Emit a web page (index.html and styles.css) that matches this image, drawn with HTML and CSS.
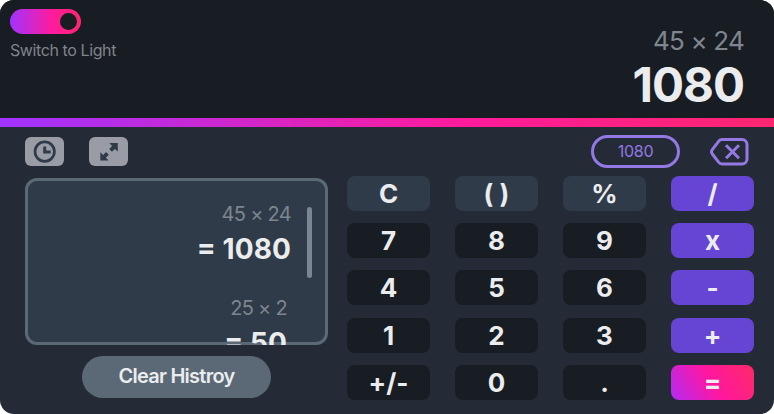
FILE: index.html
```
<!DOCTYPE html>
<html lang="en">
<head>
<meta charset="utf-8">
<title>Calculator</title>
<link rel="stylesheet" href="styles.css">
</head>
<body>
<main class="calculator">
  <header class="display">
    <div class="theme">
      <div class="toggle"><span class="knob"></span></div>
      <span class="theme-label">Switch to Light</span>
    </div>
    <div class="output">
      <span class="expression">45 × 24</span>
      <strong class="result">1080</strong>
    </div>
  </header>
  <div class="divider"></div>
  <section class="body">
    <div class="toolbar">
      <button class="tool" aria-label="History">
        <svg width="24" height="24" viewBox="0 0 24 24" fill="none" stroke="#2f3b49" stroke-width="2.7"><circle cx="11.700" cy="11.600" r="9.7"/><path d="M11.700 6.600v5.300h6" stroke-width="3"/></svg>
      </button>
      <button class="tool" aria-label="Expand">
        <svg width="24" height="24" viewBox="0 0 24 24" fill="#2f3b49"><path d="M12.3 3H20.8V11.5L17.9 8.9L14.9 11.7L12.2 9.1L15.1 6ZM3.3 12.2L6.2 14.9L9 12.1L11.8 14.8L8.9 17.7L11.7 20.5H3.3Z"/></svg>
      </button>
      <span class="memory">1080</span>
      <button class="erase" aria-label="Delete">
        <svg width="40" height="28" viewBox="0 0 40 28" fill="none" stroke="#9478e4" stroke-width="3"><path d="M12 1.5H32a5 5 0 0 1 5 5V21a5 5 0 0 1-5 5H12Q10 26 8.600 24.200L2.300 16Q.8 13.800 2.300 11.500L8.600 3.300Q10 1.500 12 1.500Z"/><path d="M16 7.200 29 20.200M29 7.200 16 20.200"/></svg>
      </button>
    </div>
    <div class="panels">
      <div class="side">
        <div class="history">
          <div class="entries">
            <div class="entry"><span class="entry-exp">45 × 24</span><strong class="entry-res"><span class="eq">=</span> 1080</strong></div>
            <div class="entry entry-next"><span class="entry-exp">25 × 2</span><strong class="entry-res"><span class="eq">=</span> 50</strong></div>
          </div>
          <span class="scrollbar"></span>
        </div>
        <button class="clear">Clear Histroy</button>
      </div>
      <div class="keys">
        <button class="key fn">C</button><button class="key fn">( )</button><button class="key fn">%</button><button class="key op">/</button>
        <button class="key">7</button><button class="key">8</button><button class="key">9</button><button class="key op">x</button>
        <button class="key">4</button><button class="key">5</button><button class="key">6</button><button class="key op">-</button>
        <button class="key">1</button><button class="key">2</button><button class="key">3</button><button class="key op">+</button>
        <button class="key">+/-</button><button class="key">0</button><button class="key">.</button><button class="key equals">=</button>
      </div>
    </div>
  </section>
</main>
</body>
</html>
```
FILE: styles.css
```
* { box-sizing: border-box; }
body { margin: 0; background: #fff; font-family: Inter, sans-serif; font-optical-sizing: none; }
button { border: 0; padding: 0; margin: 0; font-family: inherit; font-optical-sizing: none; }
svg { display: block; }
.calculator { width: 774px; height: 414px; border-radius: 14px; overflow: hidden; background: #242b36; }
.display { height: 118px; background: #181c23; display: flex; justify-content: space-between; padding: 9px 30px 0 10px; }
.toggle { width: 71px; height: 25px; border-radius: 13px; background: linear-gradient(90deg, #a233ff 0%, #ff1b9b 60%, #ff2670 100%); display: flex; justify-content: flex-end; padding: 4px; }
.knob { width: 17px; height: 17px; border-radius: 50%; background: #181c23; }
.theme-label { display: block; margin-top: 6px; font-size: 16px; line-height: 20px; letter-spacing: -0.4px; color: #7f858c; white-space: nowrap; }
.output { display: flex; flex-direction: column; align-items: flex-end; padding-top: 16px; }
.expression { font-size: 26px; line-height: 32px; letter-spacing: -0.8px; color: #7f868f; }
.result { font-size: 47.5px; line-height: 56px; font-weight: 700; letter-spacing: -1px; color: #ebecee; }
.divider { height: 9px; background: linear-gradient(90deg, #a033ff 0%, #ff1b9b 60%, #ff2670 100%); }
.body { padding: 8px 20px 0 25px; }
.toolbar { display: flex; align-items: center; height: 33px; }
.tool { width: 39px; height: 29px; border-radius: 6px; background: #999ca4; display: flex; align-items: center; justify-content: center; margin-right: 25px; }
.memory { width: 89px; height: 33px; border: 3px solid #9478e4; border-radius: 17px; margin-left: 438px; color: #9478e4; font-size: 16px; letter-spacing: -0.3px; display: flex; align-items: center; justify-content: center; padding-bottom: 1px; }
.erase { background: none; margin-left: 30px; }
.panels { display: flex; align-items: flex-start; padding-top: 8px; }
.side { width: 303px; padding-top: 2px; display: flex; flex-direction: column; align-items: center; }
.history { width: 303px; height: 167px; border-radius: 12px; background: #2f3b49; box-shadow: inset 0 0 0 3px #5b6977; overflow: hidden; display: flex; justify-content: flex-end; padding: 24px 16px 0 0; }
.entries { margin-right: 16px; }
.entry { display: flex; flex-direction: column; align-items: flex-end; height: 94px; }
.entry-next { padding-right: 4px; }
.entry-exp { font-size: 20px; line-height: 24px; letter-spacing: -0.7px; color: #7d858e; }
.entry-res { font-size: 28px; line-height: 34px; font-weight: 700; letter-spacing: 0.1px; margin-top: 6px; color: #ebecee; }
.eq { font-feature-settings: "case"; }
.scrollbar { width: 5px; height: 71px; border-radius: 3px; background: #7c8690; margin-top: 5px; }
.clear { width: 189px; height: 42px; border-radius: 21px; margin-top: 11px; background: #5b6977; color: #ebecee; font-size: 20px; font-weight: 600; letter-spacing: -0.75px; padding-bottom: 2px; }
.keys { margin-left: 19px; display: grid; grid-template-columns: repeat(4, 83px); grid-auto-rows: 35px; gap: 12.2px 25px; }
.key { border-radius: 8px; background: #181c23; color: #ebecee; font-size: 26px; font-weight: 700; line-height: 35px; }
.fn { background: #2f3b49; }
.op { background: #6644d4; }
.equals { background: linear-gradient(60deg, #b22bf5 0%, #ff179f 50%, #ff2a68 100%); }
```
